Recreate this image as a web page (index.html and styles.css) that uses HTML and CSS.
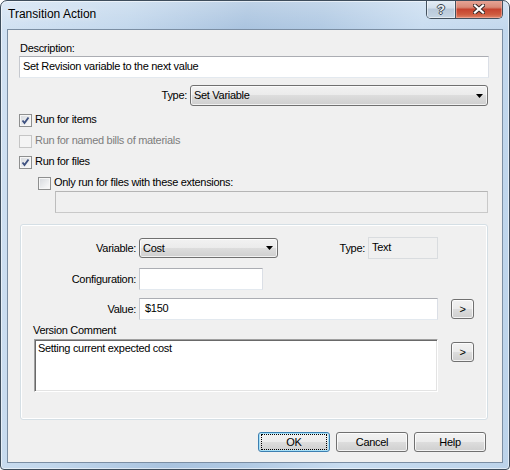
FILE: index.html
```html
<!DOCTYPE html>
<html>
<head>
<meta charset="utf-8">
<title>Transition Action</title>
<link rel="stylesheet" href="styles.css">
</head>
<body>
<div class="window">
  <div class="titlebar">
    <div class="title">Transition Action</div>
    <div class="caption">
      <div class="cap-help"><span class="qmark">?</span></div>
      <div class="cap-close">
        <svg width="12" height="10" viewBox="0 0 12 10"><path d="M2 1.5 L10 8.5 M10 1.5 L2 8.5" stroke="#3b2a28" stroke-width="4.2" stroke-linecap="square" fill="none"/><path d="M2 1.5 L10 8.5 M10 1.5 L2 8.5" stroke="#ffffff" stroke-width="2.2" stroke-linecap="square" fill="none"/></svg>
      </div>
    </div>
  </div>
  <div class="client">
    <div class="lbl desc-lbl">Description:</div>
    <div class="textbox desc">Set Revision variable to the next value</div>
    <div class="type-row">
      <span class="lbl">Type:</span>
      <div class="combo type-combo"><span>Set Variable</span><svg class="arrow" width="7" height="4" viewBox="0 0 7 4"><polygon points="0,0 7,0 3.5,4" fill="#000"/></svg></div>
    </div>
    <div class="check-row">
      <span class="cb"><svg width="11" height="11" viewBox="0 0 11 11"><path d="M2.5 5.5 L4.5 8 L8.5 2.5" stroke="#3f5281" stroke-width="1.9" fill="none"/></svg></span>
      <span class="cb-text">Run for items</span>
    </div>
    <div class="check-row">
      <span class="cb disabled"></span>
      <span class="cb-text dis">Run for named bills of materials</span>
    </div>
    <div class="check-row">
      <span class="cb"><svg width="11" height="11" viewBox="0 0 11 11"><path d="M2.5 5.5 L4.5 8 L8.5 2.5" stroke="#3f5281" stroke-width="1.9" fill="none"/></svg></span>
      <span class="cb-text">Run for files</span>
    </div>
    <div class="check-row indent">
      <span class="cb"></span>
      <span class="cb-text">Only run for files with these extensions:</span>
    </div>
    <div class="textbox ext"></div>
    <div class="group">
      <div class="grow r1">
        <span class="glbl">Variable:</span>
        <div class="combo var-combo"><span>Cost</span><svg class="arrow" width="7" height="4" viewBox="0 0 7 4"><polygon points="0,0 7,0 3.5,4" fill="#000"/></svg></div>
        <span class="type-lbl">Type:</span>
        <div class="typebox">Text</div>
      </div>
      <div class="grow r2">
        <span class="glbl">Configuration:</span>
        <div class="textbox config"></div>
      </div>
      <div class="grow r3">
        <span class="glbl">Value:</span>
        <div class="textbox value">$150</div>
        <div class="btn small">&gt;</div>
      </div>
      <div class="lbl vc-lbl">Version Comment</div>
      <div class="comment-row">
        <div class="comment">Setting current expected cost</div>
        <div class="btn small cbtn">&gt;</div>
      </div>
    </div>
    <div class="buttons">
      <div class="btn wide default"><span class="focus">OK</span></div>
      <div class="btn wide">Cancel</div>
      <div class="btn wide">Help</div>
    </div>
  </div>
</div>
</body>
</html>
```

FILE: styles.css
```css
html, body {
  margin: 0;
  padding: 0;
  background: #ffffff;
}

body {
  font-family: "Liberation Sans", Arial, sans-serif;
  font-size: 11px;
  letter-spacing: -0.3px;
  color: #000;
}

.window {
  width: 510px;
  height: 470px;
  box-sizing: border-box;
  border: 1px solid #3e4d5c;
  border-radius: 7px 7px 4px 4px;
  background:
    linear-gradient(180deg, rgba(255,255,255,0.25) 0%, rgba(255,255,255,0) 30px),
    linear-gradient(100deg, #d2e2f3 0%, #c2d7ec 22%, #a9c3df 42%, #b0c9e3 55%, #c8dcf0 72%, #bcd3ea 100%);
  box-shadow: inset 0 0 0 1px rgba(255,255,255,0.55);
  padding: 0 6px 6px 6px;
  display: flex;
  flex-direction: column;
  overflow: hidden;
}

.titlebar {
  height: 28px;
  display: flex;
  justify-content: space-between;
  align-items: flex-start;
  flex: none;
}

.title {
  font-size: 12px;
  letter-spacing: 0;
  line-height: 15px;
  margin: 6px 0 0 1px;
  text-shadow: 0 0 6px rgba(255,255,255,0.9);
}

.caption {
  display: flex;
  margin-top: -1px;
  height: 19px;
  box-sizing: border-box;
  border: 1px solid #44515e;
  border-top: none;
  border-radius: 0 0 5px 5px;
  overflow: hidden;
}

.cap-help {
  width: 28px;
  border-right: 1px solid #44515e;
  background: linear-gradient(180deg, #e6eef6 0%, #d3dfeb 45%, #b9c9da 50%, #c6d5e4 100%);
  display: flex;
  align-items: center;
  justify-content: center;
  box-shadow: inset 0 0 0 1px rgba(255,255,255,0.5);
}

.qmark {
  font-size: 13px;
  font-weight: bold;
  letter-spacing: 0;
  line-height: 13px;
  color: #eef2f6;
  text-shadow: 1px 0 0 #3c4650, -1px 0 0 #3c4650, 0 1px 0 #3c4650, 0 -1px 0 #3c4650;
}

.cap-close {
  width: 46px;
  background: linear-gradient(180deg, #e9a799 0%, #d98a77 40%, #c6432f 52%, #cf5b3f 80%, #e0866a 100%);
  display: flex;
  align-items: center;
  justify-content: center;
  box-shadow: inset 0 0 0 1px rgba(255,200,190,0.45);
}

.client {
  flex: 1;
  border: 1px solid #7b8ea3;
  background: #f0f0f0;
  display: flex;
  flex-direction: column;
}

.lbl {
  height: 13px;
  line-height: 13px;
  white-space: nowrap;
}

.desc-lbl {
  margin: 12px 0 1px 12px;
}

.textbox {
  box-sizing: border-box;
  height: 22px;
  background: #fff;
  border: 1px solid;
  border-color: #abadb3 #dbdfe6 #e3e9ef #c6c9cf;
  line-height: 19px;
  white-space: nowrap;
}

.desc {
  margin-left: 11px;
  width: 470px;
  padding-left: 3px;
}

.type-row {
  margin-top: 7px;
  height: 21px;
  display: flex;
  align-items: center;
  justify-content: flex-end;
  padding-right: 14px;
  gap: 3px;
}

.combo {
  box-sizing: border-box;
  border: 1px solid #707070;
  border-radius: 3px;
  background: linear-gradient(180deg, #f2f2f2 0%, #ebebeb 50%, #dddddd 50%, #cfcfcf 100%);
  box-shadow: inset 0 0 0 1px rgba(255,255,255,0.7);
  display: flex;
  align-items: center;
  justify-content: space-between;
  padding: 0 4px 0 3px;
  line-height: 13px;
  white-space: nowrap;
}

.type-combo {
  width: 298px;
  height: 21px;
}

.arrow {
  flex: none;
}

.check-row {
  display: flex;
  height: 13px;
  margin: 8px 0 0 11px;
  gap: 3px;
  align-items: flex-start;
}

.check-row.indent {
  margin-left: 30px;
}

.cb {
  width: 13px;
  height: 13px;
  box-sizing: border-box;
  border: 1px solid #8e8f8f;
  background: linear-gradient(135deg, #d5d8dc 0%, #f1f2f3 70%, #fbfbfb 100%);
  box-shadow: inset 0 0 0 1px #f6f6f6;
  flex: none;
  display: flex;
  align-items: center;
  justify-content: center;
}

.cb.disabled {
  border-color: #c5c5c5;
  background: #f4f4f4;
  box-shadow: none;
}

.cb-text {
  line-height: 13px;
  margin-top: -1px;
  white-space: nowrap;
}

.cb-text.dis {
  color: #7d7d7d;
}

.ext {
  margin: 1px 0 0 47px;
  width: 433px;
  background: #f0f0f0;
  border-color: #b5b5b5 #c9c9c9 #c9c9c9 #bdbdbd;
}

.group {
  margin: 11px 0 0 12px;
  width: 468px;
  height: 196px;
  box-sizing: border-box;
  border: 1px solid #d5dfe5;
  border-radius: 3px;
  box-shadow: inset 0 0 0 1px #ffffff;
  display: flex;
  flex-direction: column;
}

.grow {
  display: flex;
  align-items: center;
  height: 22px;
}

.r1 { margin-top: 12px; }
.r2 { margin-top: 9px; }
.r3 { margin-top: 8px; }

.glbl {
  width: 115px;
  margin-right: 3px;
  text-align: right;
  line-height: 13px;
  white-space: nowrap;
  flex: none;
}

.var-combo {
  width: 139px;
  height: 20px;
}

.type-lbl {
  width: 28px;
  margin: 0 3px 0 59px;
  text-align: right;
  line-height: 13px;
  white-space: nowrap;
}

.typebox {
  box-sizing: border-box;
  width: 70px;
  height: 22px;
  border: 1px solid #d9dcdf;
  background: #f0f0f0;
  padding: 3px 0 0 3px;
  line-height: 13px;
  align-self: stretch;
}

.config {
  width: 124px;
}

.value {
  width: 299px;
  padding-left: 5px;
}

.btn {
  box-sizing: border-box;
  border: 1px solid #707070;
  border-radius: 3px;
  background: linear-gradient(180deg, #f2f2f2 0%, #ebebeb 50%, #dddddd 50%, #cfcfcf 100%);
  box-shadow: inset 0 0 0 1px rgba(255,255,255,0.75);
  display: flex;
  align-items: center;
  justify-content: center;
  line-height: 13px;
  white-space: nowrap;
  flex: none;
}

.btn.small {
  width: 23px;
  height: 20px;
  margin-left: 13px;
}

.vc-lbl {
  margin: 4px 0 0 12px;
}

.comment-row {
  margin-top: 2px;
  display: flex;
  align-items: flex-start;
}

.comment {
  margin-left: 13px;
  width: 404px;
  height: 53px;
  box-sizing: border-box;
  background: #fff;
  border-style: solid;
  border-width: 1px;
  border-color: #a0a0a0 #ffffff #ffffff #a0a0a0;
  box-shadow: inset 1px 1px 0 #696969, inset -1px -1px 0 #e3e3e3;
  padding: 2px 0 0 3px;
  line-height: 13px;
  white-space: nowrap;
}

.btn.cbtn {
  margin-top: 3px;
}

.buttons {
  margin-top: 12px;
  display: flex;
  justify-content: flex-end;
  gap: 6px;
  padding-right: 16px;
}

.btn.wide {
  width: 72px;
  height: 20px;
}

.btn.default {
  border-color: #3c7fb1;
  box-shadow: inset 0 0 0 1px #a8e1f8;
  align-items: stretch;
  justify-content: stretch;
}

.focus {
  flex: 1;
  margin: 1px 2px;
  border: 1px dotted #000;
  display: flex;
  align-items: center;
  justify-content: center;
}
```
